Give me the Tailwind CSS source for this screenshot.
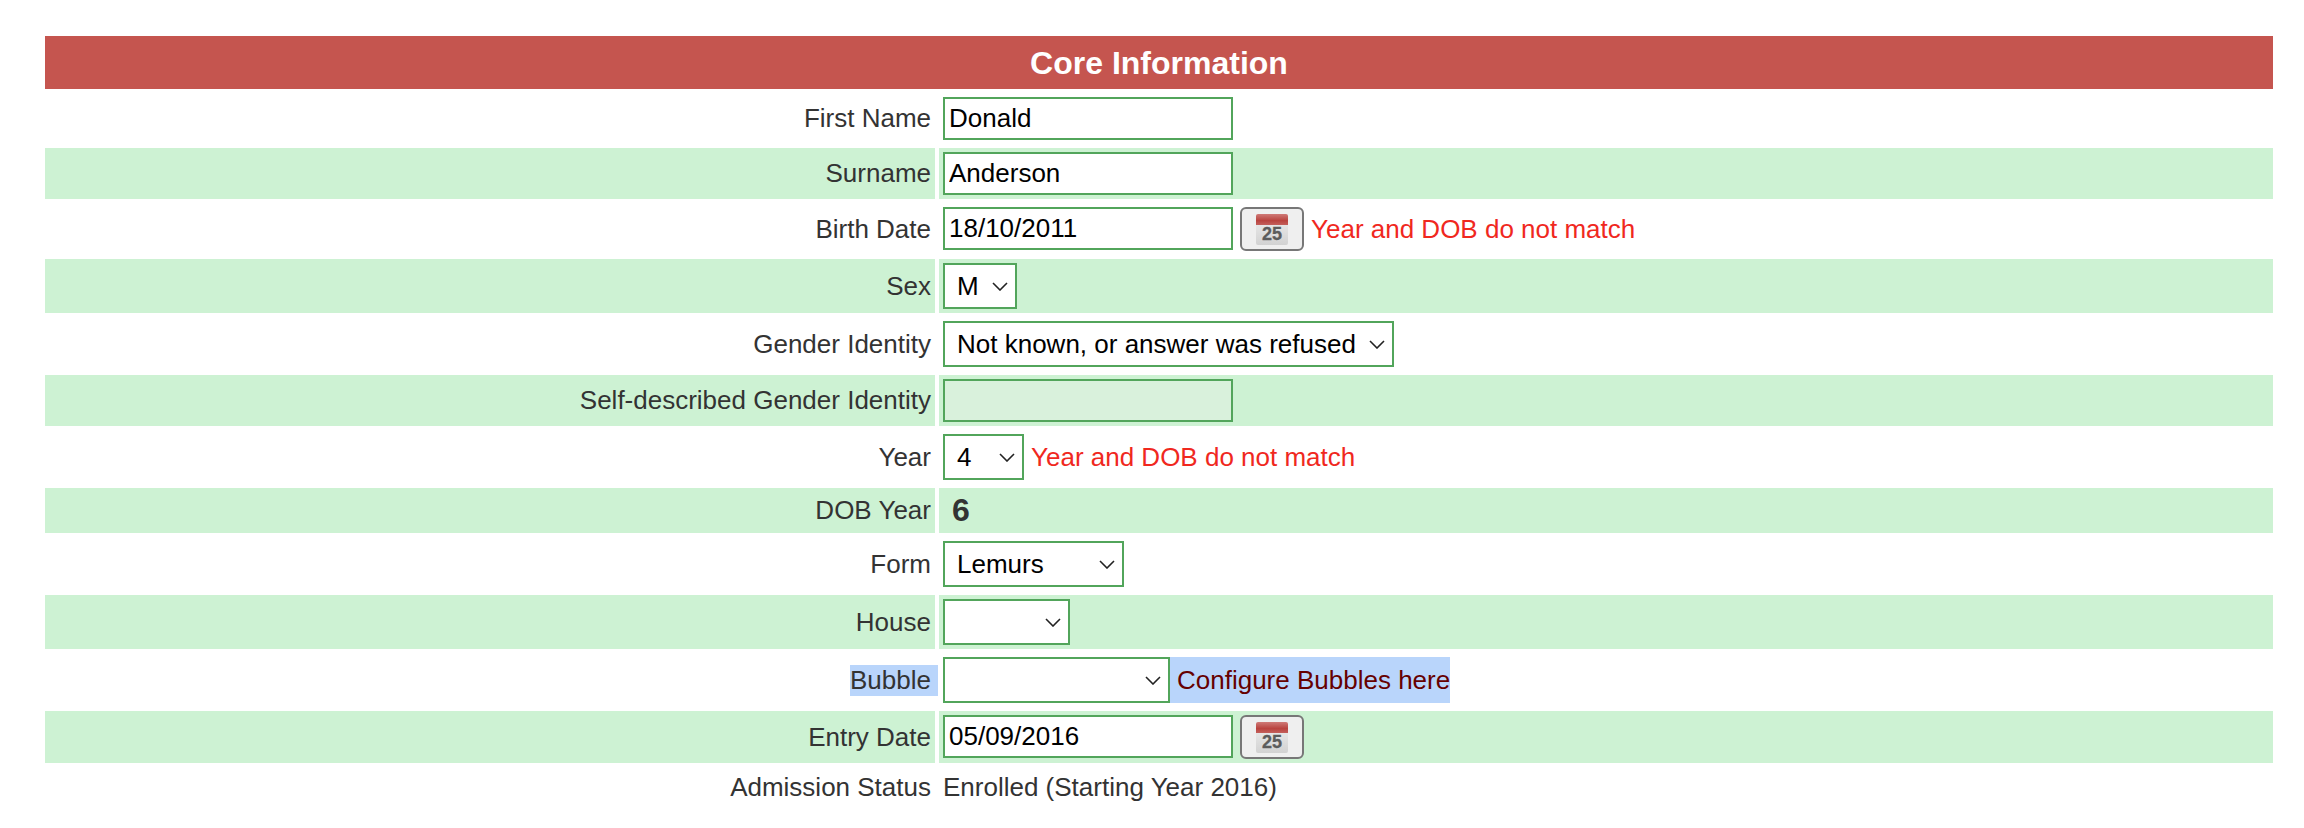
<!DOCTYPE html>
<html lang="en">
<head>
<meta charset="utf-8">
<title>Core Information</title>
<script src="https://cdn.jsdelivr.net/npm/@tailwindcss/browser@4"></script>
</head>
<body class="bg-white font-['Liberation_Sans',sans-serif] text-[26px] text-[#333]">
<div class="pt-[36px] pl-[45px]">
  <div class="grid grid-cols-[890px_1334px] gap-1">

    <!-- Header -->
    <div class="col-span-2 h-[53px] pt-px flex items-center justify-center bg-[#c5554f] text-white font-bold text-[32px]">Core Information</div>

    <!-- First Name -->
    <div class="flex items-center justify-end pr-1">First Name</div>
    <div class="flex items-center pl-1 py-1">
      <input type="text" value="Donald" class="w-[290px] h-[43px] border-2 border-[#52a55b] bg-white px-1 text-black outline-none">
    </div>

    <!-- Surname -->
    <div class="flex items-center justify-end pr-1 bg-[#cdf2d3]">Surname</div>
    <div class="flex items-center pl-1 py-1 bg-[#cdf2d3]">
      <input type="text" value="Anderson" class="w-[290px] h-[43px] border-2 border-[#52a55b] bg-white px-1 text-black outline-none">
    </div>

    <!-- Birth Date -->
    <div class="flex items-center justify-end pr-1">Birth Date</div>
    <div class="flex items-start pl-1 py-1">
      <input type="text" value="18/10/2011" class="w-[290px] h-[43px] border-2 border-[#52a55b] bg-white px-1 text-black outline-none">
      <button type="button" class="ml-[7px] w-[64px] h-[44px] flex items-center justify-center border-2 border-[#777] rounded-[6px] bg-[#efefef]">
        <svg width="32" height="32" viewBox="0 0 32 32">
          <defs>
            <linearGradient id="calTop" x1="0" y1="0" x2="0" y2="1"><stop offset="0" stop-color="#cf7a77"/><stop offset="0.6" stop-color="#b9433f"/><stop offset="1" stop-color="#c4605c"/></linearGradient>
            <linearGradient id="calBody" x1="0" y1="0" x2="0" y2="1"><stop offset="0" stop-color="#f0f0f0"/><stop offset="1" stop-color="#d2d2d2"/></linearGradient>
          </defs>
          <rect x="0" y="1" width="32" height="31" rx="2" fill="url(#calBody)"/>
          <path d="M0 3a2 2 0 0 1 2-2h28a2 2 0 0 1 2 2v9H0z" fill="url(#calTop)"/>
          <text x="16" y="27" text-anchor="middle" font-family="Liberation Sans" font-weight="700" font-size="18" fill="#5c5c5c" stroke="#5c5c5c" stroke-width="0.3">25</text>
        </svg>
      </button>
      <span class="ml-[7px] self-center text-[#f0281e]">Year and DOB do not match</span>
    </div>

    <!-- Sex -->
    <div class="flex items-center justify-end pr-1 bg-[#cdf2d3]">Sex</div>
    <div class="flex items-center pl-1 py-1 bg-[#cdf2d3]">
      <div class="relative">
        <select class="block appearance-none w-[74px] h-[46px] border-2 border-[#52a55b] bg-white pl-3 text-black outline-none"><option>M</option><option>F</option></select>
        <svg class="absolute right-[9px] top-[19px] pointer-events-none" width="16" height="9" viewBox="0 0 16 9" fill="none" stroke="#222" stroke-width="1.6"><path d="M1 1l7 7 7-7"/></svg>
      </div>
    </div>

    <!-- Gender Identity -->
    <div class="flex items-center justify-end pr-1">Gender Identity</div>
    <div class="flex items-center pl-1 py-1">
      <div class="relative">
        <select class="block appearance-none w-[451px] h-[46px] border-2 border-[#52a55b] bg-white pl-3 text-black outline-none"><option>Not known, or answer was refused</option></select>
        <svg class="absolute right-[9px] top-[19px] pointer-events-none" width="16" height="9" viewBox="0 0 16 9" fill="none" stroke="#222" stroke-width="1.6"><path d="M1 1l7 7 7-7"/></svg>
      </div>
    </div>

    <!-- Self-described Gender Identity -->
    <div class="flex items-center justify-end pr-1 bg-[#cdf2d3]">Self-described Gender Identity</div>
    <div class="flex items-center pl-1 py-1 bg-[#cdf2d3]">
      <input type="text" class="w-[290px] h-[43px] border-2 border-[#52a55b] bg-[#d9f1dc] px-1 text-black outline-none">
    </div>

    <!-- Year -->
    <div class="flex items-center justify-end pr-1">Year</div>
    <div class="flex items-center pl-1 py-1">
      <div class="relative">
        <select class="block appearance-none w-[81px] h-[46px] border-2 border-[#52a55b] bg-white pl-3 text-black outline-none"><option>4</option></select>
        <svg class="absolute right-[9px] top-[19px] pointer-events-none" width="16" height="9" viewBox="0 0 16 9" fill="none" stroke="#222" stroke-width="1.6"><path d="M1 1l7 7 7-7"/></svg>
      </div>
      <span class="ml-[7px] text-[#f0281e]">Year and DOB do not match</span>
    </div>

    <!-- DOB Year -->
    <div class="h-[45px] flex items-center justify-end pr-1 bg-[#cdf2d3]">DOB Year</div>
    <div class="h-[45px] pb-[2px] flex items-center pl-[13px] bg-[#cdf2d3] font-bold text-[32px]">6</div>

    <!-- Form -->
    <div class="flex items-center justify-end pr-1">Form</div>
    <div class="flex items-center pl-1 py-1">
      <div class="relative">
        <select class="block appearance-none w-[181px] h-[46px] border-2 border-[#52a55b] bg-white pl-3 text-black outline-none"><option>Lemurs</option></select>
        <svg class="absolute right-[9px] top-[19px] pointer-events-none" width="16" height="9" viewBox="0 0 16 9" fill="none" stroke="#222" stroke-width="1.6"><path d="M1 1l7 7 7-7"/></svg>
      </div>
    </div>

    <!-- House -->
    <div class="flex items-center justify-end pr-1 bg-[#cdf2d3]">House</div>
    <div class="flex items-center pl-1 py-1 bg-[#cdf2d3]">
      <div class="relative">
        <select class="block appearance-none w-[127px] h-[46px] border-2 border-[#52a55b] bg-white pl-3 text-black outline-none"><option></option></select>
        <svg class="absolute right-[9px] top-[19px] pointer-events-none" width="16" height="9" viewBox="0 0 16 9" fill="none" stroke="#222" stroke-width="1.6"><path d="M1 1l7 7 7-7"/></svg>
      </div>
    </div>

    <!-- Bubble (highlighted) -->
    <div class="flex items-center justify-end pr-1"><span class="h-[31px] leading-[31px] -mr-[7px] pr-[7px] bg-[#b9d5fb]">Bubble</span></div>
    <div class="flex items-center pl-1 py-1">
      <div class="relative">
        <select class="block appearance-none w-[227px] h-[46px] border-2 border-[#52a55b] bg-white pl-3 text-black outline-none"><option></option></select>
        <svg class="absolute right-[9px] top-[19px] pointer-events-none" width="16" height="9" viewBox="0 0 16 9" fill="none" stroke="#222" stroke-width="1.6"><path d="M1 1l7 7 7-7"/></svg>
      </div>
      <a href="#" class="h-[46px] leading-[46px] pl-[7px] bg-[#b9d5fb] text-[#660000]">Configure Bubbles here</a>
    </div>

    <!-- Entry Date -->
    <div class="flex items-center justify-end pr-1 bg-[#cdf2d3]">Entry Date</div>
    <div class="flex items-start pl-1 py-1 bg-[#cdf2d3]">
      <input type="text" value="05/09/2016" class="w-[290px] h-[43px] border-2 border-[#52a55b] bg-white px-1 text-black outline-none">
      <button type="button" class="ml-[7px] w-[64px] h-[44px] flex items-center justify-center border-2 border-[#777] rounded-[6px] bg-[#efefef]">
        <svg width="32" height="32" viewBox="0 0 32 32">
          <rect x="0" y="1" width="32" height="31" rx="2" fill="url(#calBody)"/>
          <path d="M0 3a2 2 0 0 1 2-2h28a2 2 0 0 1 2 2v9H0z" fill="url(#calTop)"/>
          <text x="16" y="27" text-anchor="middle" font-family="Liberation Sans" font-weight="700" font-size="18" fill="#5c5c5c" stroke="#5c5c5c" stroke-width="0.3">25</text>
        </svg>
      </button>
    </div>

    <!-- Admission Status -->
    <div class="h-[40px] flex items-center justify-end pr-1">Admission Status</div>
    <div class="h-[40px] flex items-center pl-1">Enrolled (Starting Year 2016)</div>

  </div>
</div>
</body>
</html>
